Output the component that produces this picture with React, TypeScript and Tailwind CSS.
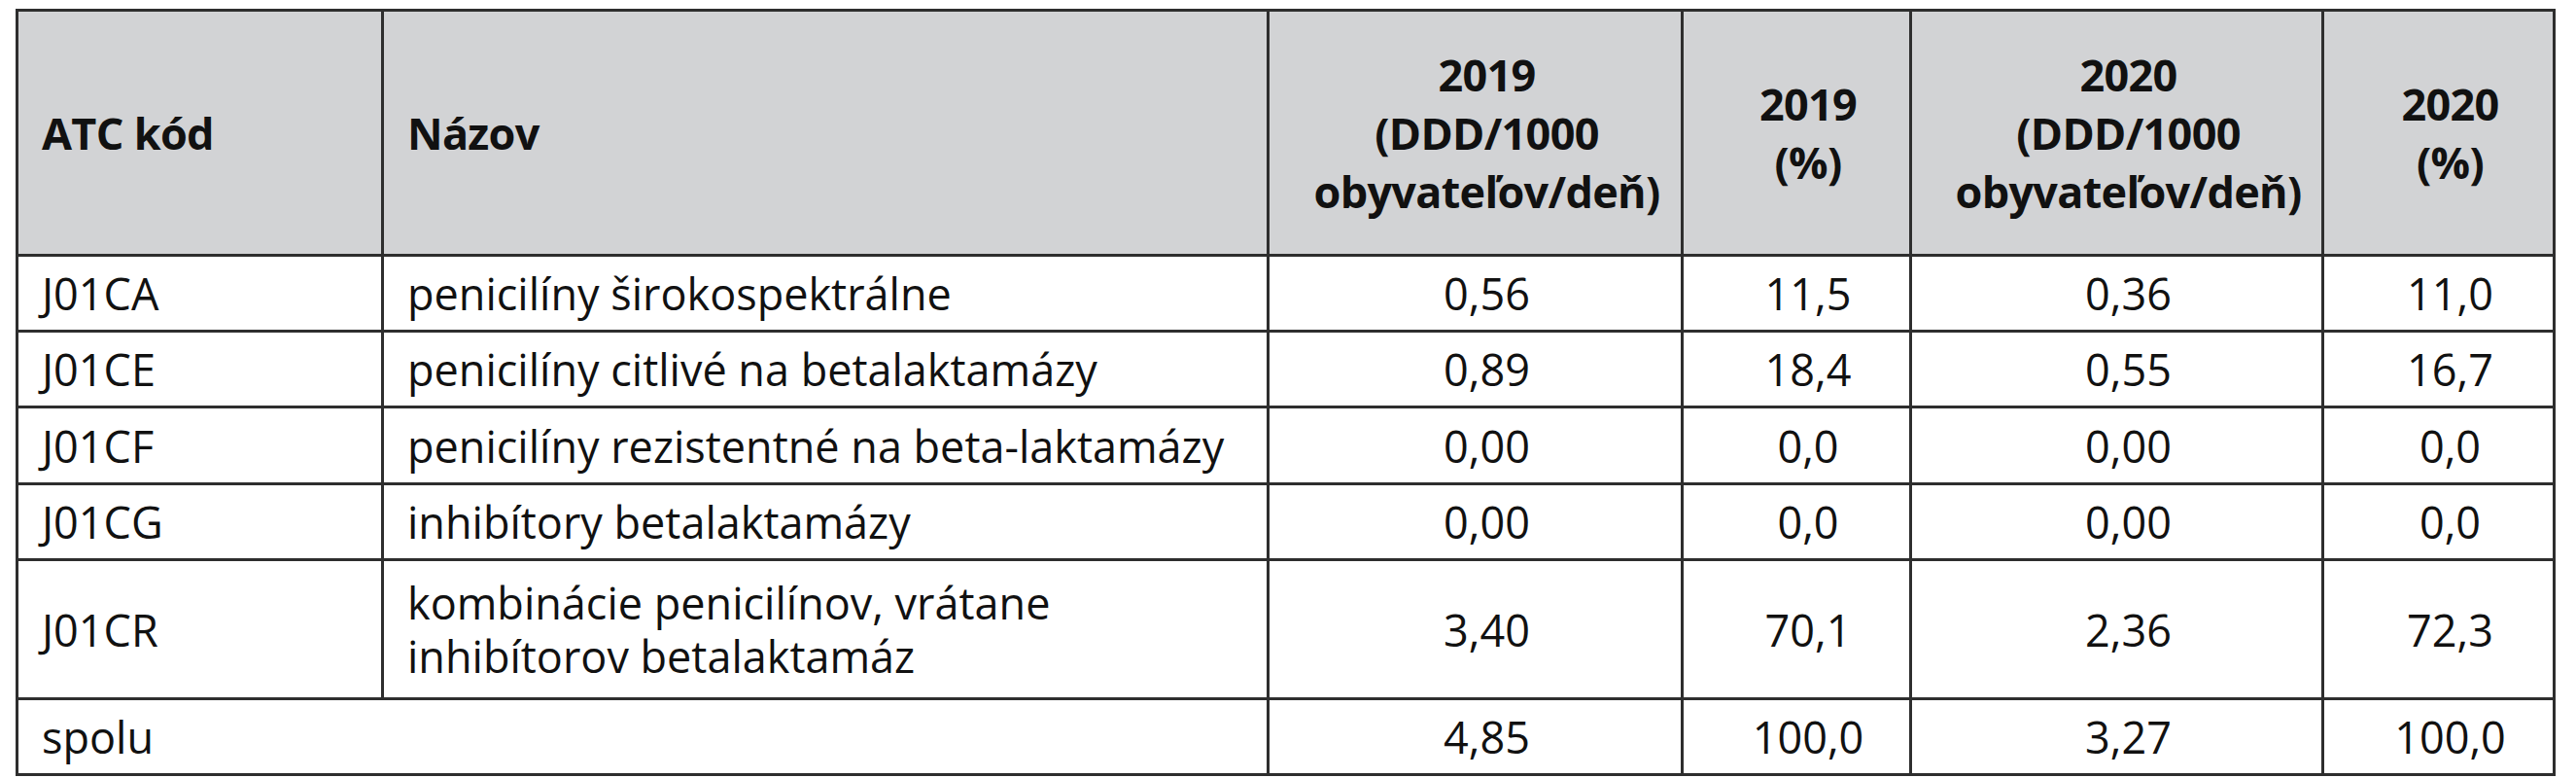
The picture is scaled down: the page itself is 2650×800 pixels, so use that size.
const rows = [
  { code: "J01CA", name: ["penicilíny širokospektrálne"], a: "0,56", b: "11,5", c: "0,36", d: "11,0", h: "h-[78px]" },
  { code: "J01CE", name: ["penicilíny citlivé na betalaktamázy"], a: "0,89", b: "18,4", c: "0,55", d: "16,7", h: "h-[78px]" },
  { code: "J01CF", name: ["penicilíny rezistentné na beta-laktamázy"], a: "0,00", b: "0,0", c: "0,00", d: "0,0", h: "h-[79px]" },
  { code: "J01CG", name: ["inhibítory betalaktamázy"], a: "0,00", b: "0,0", c: "0,00", d: "0,0", h: "h-[78px]" },
  {
    code: "J01CR",
    name: ["kombinácie penicilínov, vrátane", "inhibítorov betalaktamáz"],
    a: "3,40",
    b: "70,1",
    c: "2,36",
    d: "72,3",
    h: "h-[143px]",
  },
];

const cell = "border-[3px] border-[#2e2e2e] pl-[24px] pr-0 align-middle";

export default function App() {
  return (
    <div className="min-h-[800px] w-[2650px] bg-white pl-[16px] pt-[9px] font-['Open_Sans',sans-serif] text-[#111111]">
      <table className="w-[2610px] table-fixed border-collapse">
        <colgroup>
          <col className="w-[376px]" />
          <col className="w-[911px]" />
          <col className="w-[426px]" />
          <col className="w-[235px]" />
          <col className="w-[424px]" />
          <col className="w-[238px]" />
        </colgroup>
        <thead>
          <tr className="h-[252px] bg-[#d2d3d5] text-[45px] font-extrabold leading-[60px] tracking-[-0.7px]">
            <th className={`${cell} text-left`}>ATC kód</th>
            <th className={`${cell} text-left`}>Názov</th>
            <th className={`${cell} text-center`}>
              2019
              <br />
              (DDD/1000
              <br />
              obyvateľov/deň)
            </th>
            <th className={`${cell} text-center`}>
              2019
              <br />
              (%)
            </th>
            <th className={`${cell} text-center`}>
              2020
              <br />
              (DDD/1000
              <br />
              obyvateľov/deň)
            </th>
            <th className={`${cell} text-center`}>
              2020
              <br />
              (%)
            </th>
          </tr>
        </thead>
        <tbody className="text-[45px] leading-[55px]">
          {rows.map((r) => (
            <tr key={r.code} className={r.h}>
              <td className={`${cell} text-left`}>{r.code}</td>
              <td className={`${cell} text-left`}>
                {r.name.map((line, i) => (
                  <div key={i}>{line}</div>
                ))}
              </td>
              <td className={`${cell} text-center`}>{r.a}</td>
              <td className={`${cell} text-center`}>{r.b}</td>
              <td className={`${cell} text-center`}>{r.c}</td>
              <td className={`${cell} text-center`}>{r.d}</td>
            </tr>
          ))}
          <tr className="h-[78px]">
            <td colSpan={2} className={`${cell} text-left`}>
              spolu
            </td>
            <td className={`${cell} text-center`}>4,85</td>
            <td className={`${cell} text-center`}>100,0</td>
            <td className={`${cell} text-center`}>3,27</td>
            <td className={`${cell} text-center`}>100,0</td>
          </tr>
        </tbody>
      </table>
    </div>
  );
}
